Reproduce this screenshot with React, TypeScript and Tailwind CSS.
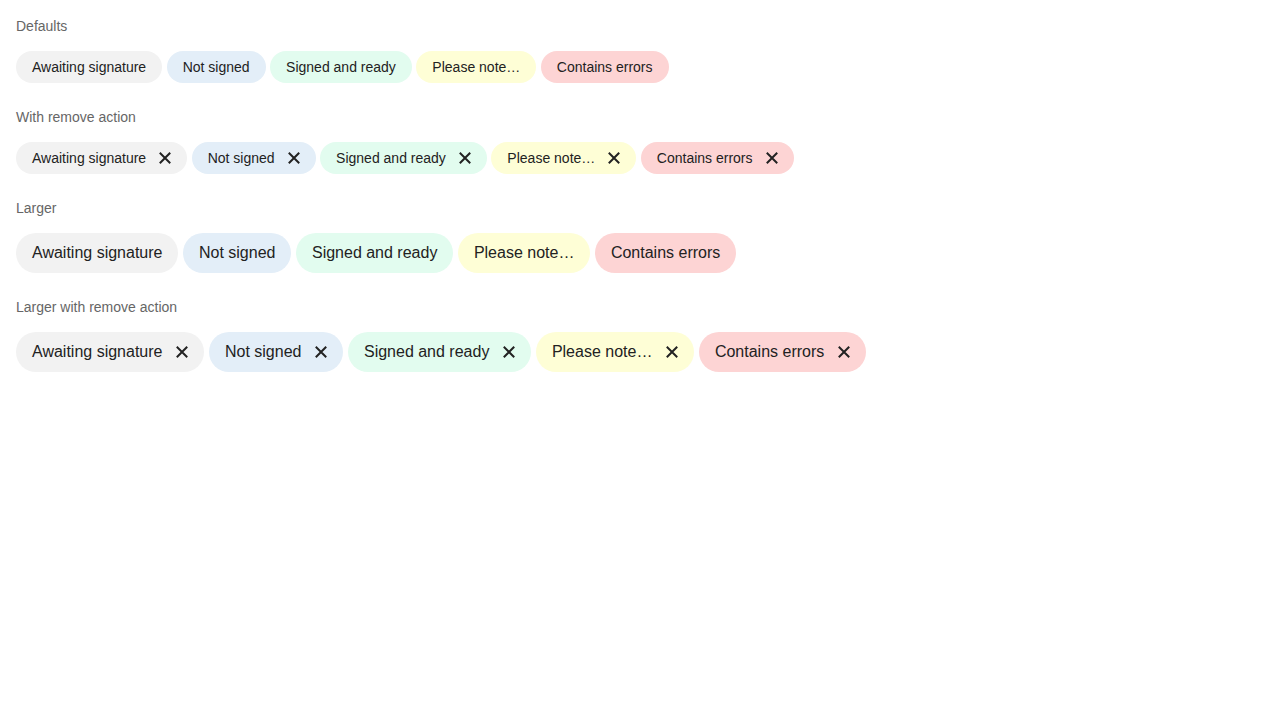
import React from "react";

const chips = [
  { label: "Awaiting signature", cls: "bg-[#f2f2f2]" },
  { label: "Not signed", cls: "bg-[#e3eef8]" },
  { label: "Signed and ready", cls: "bg-[#e2fcef]" },
  { label: "Please note…", cls: "bg-[#fefed6]" },
  { label: "Contains errors", cls: "bg-[#fdd4d4]" },
];

function X({ size }: { size: number }) {
  return (
    <svg width={size} height={size} viewBox="0 0 12 12" fill="none" stroke="#222" strokeWidth="2" strokeLinecap="square">
      <path d="M1.5 1.5 L10.5 10.5 M10.5 1.5 L1.5 10.5" />
    </svg>
  );
}

function Row({ large, remove }: { large?: boolean; remove?: boolean }) {
  return (
    <div className="flex gap-[4.5px]">
      {chips.map((c) => (
        <span
          key={c.label}
          className={`${c.cls} inline-flex items-center rounded-full px-4 text-[#222] ${
            large ? "h-10 text-[16px]" : "h-8 text-[14px]"
          }`}
        >
          {c.label}
          {remove && (
            <span className={large ? "ml-[14px] flex" : "ml-[13px] flex"}>
              <X size={12} />
            </span>
          )}
        </span>
      ))}
    </div>
  );
}

function Section({ title, children }: { title: string; children: React.ReactNode }) {
  return (
    <div className="flex flex-col">
      <div className="h-5 leading-5 text-[14px] text-[#666] mb-[15px]">{title}</div>
      {children}
    </div>
  );
}

export default function App() {
  return (
    <div
      className="min-h-screen bg-white p-4 flex flex-col gap-6"
      style={{ fontFamily: '"Liberation Sans", Arial, sans-serif' }}
    >
      <Section title="Defaults">
        <Row />
      </Section>
      <Section title="With remove action">
        <Row remove />
      </Section>
      <Section title="Larger">
        <Row large />
      </Section>
      <Section title="Larger with remove action">
        <Row large remove />
      </Section>
    </div>
  );
}
